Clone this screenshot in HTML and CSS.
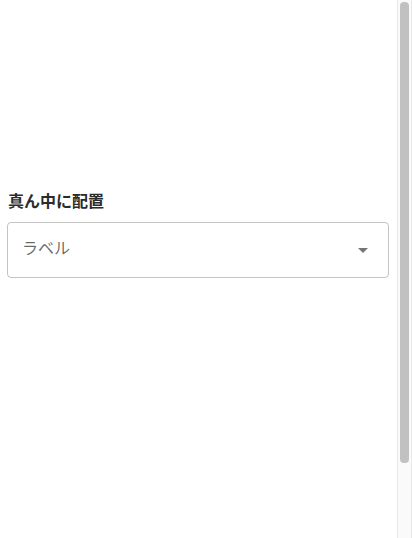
FILE: index.html
```html
<!DOCTYPE html>
<html>
<head>
    <meta charset="utf-8">
    <title>真ん中に配置</title>
    <link rel="stylesheet" href="styles.css">
</head>
<body>
    <div class="page">
        <h2 class="title">真ん中に配置</h2>
        <div class="select-field">
            <span class="select-label">ラベル</span>
            <svg class="select-icon" viewBox="0 0 24 24" width="24" height="24">
                <path d="M7 10l5 5 5-5z"></path>
            </svg>
        </div>
    </div>

    <!-- page scrollbar -->
    <div class="scrollbar">
        <div class="scrollbar-thumb"></div>
    </div>
</body>
</html>
```

FILE: styles.css
```css
* {
    box-sizing: border-box;
}

html {
    overflow: hidden;
}

body {
    margin: 8px 23px 8px 7px;
    font-family: 'Noto Sans CJK JP', 'Noto Sans', sans-serif;
    background: #fff;
}

.page {
    padding-top: 180px;
}

.title {
    margin: 0 0 10px 1px;
    font-size: 16px;
    line-height: 24px;
    font-weight: 700;
    color: #2b2b2b;
}

.select-field {
    position: relative;
    display: flex;
    align-items: center;
    height: 56px;
    padding: 0 14px;
    border: 1px solid rgba(0, 0, 0, 0.23);
    border-radius: 4px;
}

.select-label {
    font-size: 16px;
    line-height: 23px;
    margin-top: -5px;
    color: rgba(0, 0, 0, 0.6);
}

.select-icon {
    position: absolute;
    right: 13px;
    top: 15px;
    fill: rgba(0, 0, 0, 0.54);
}

.scrollbar {
    position: fixed;
    top: 0;
    right: 0;
    width: 15px;
    height: 100%;
    background: #fafafa;
    border-left: 1px solid #e8e8e8;
    border-right: 1px solid #e8e8e8;
}

.scrollbar-thumb {
    margin: 2px 2px 0;
    height: 461px;
    background: #c1c1c1;
    border-radius: 4px;
}
```
